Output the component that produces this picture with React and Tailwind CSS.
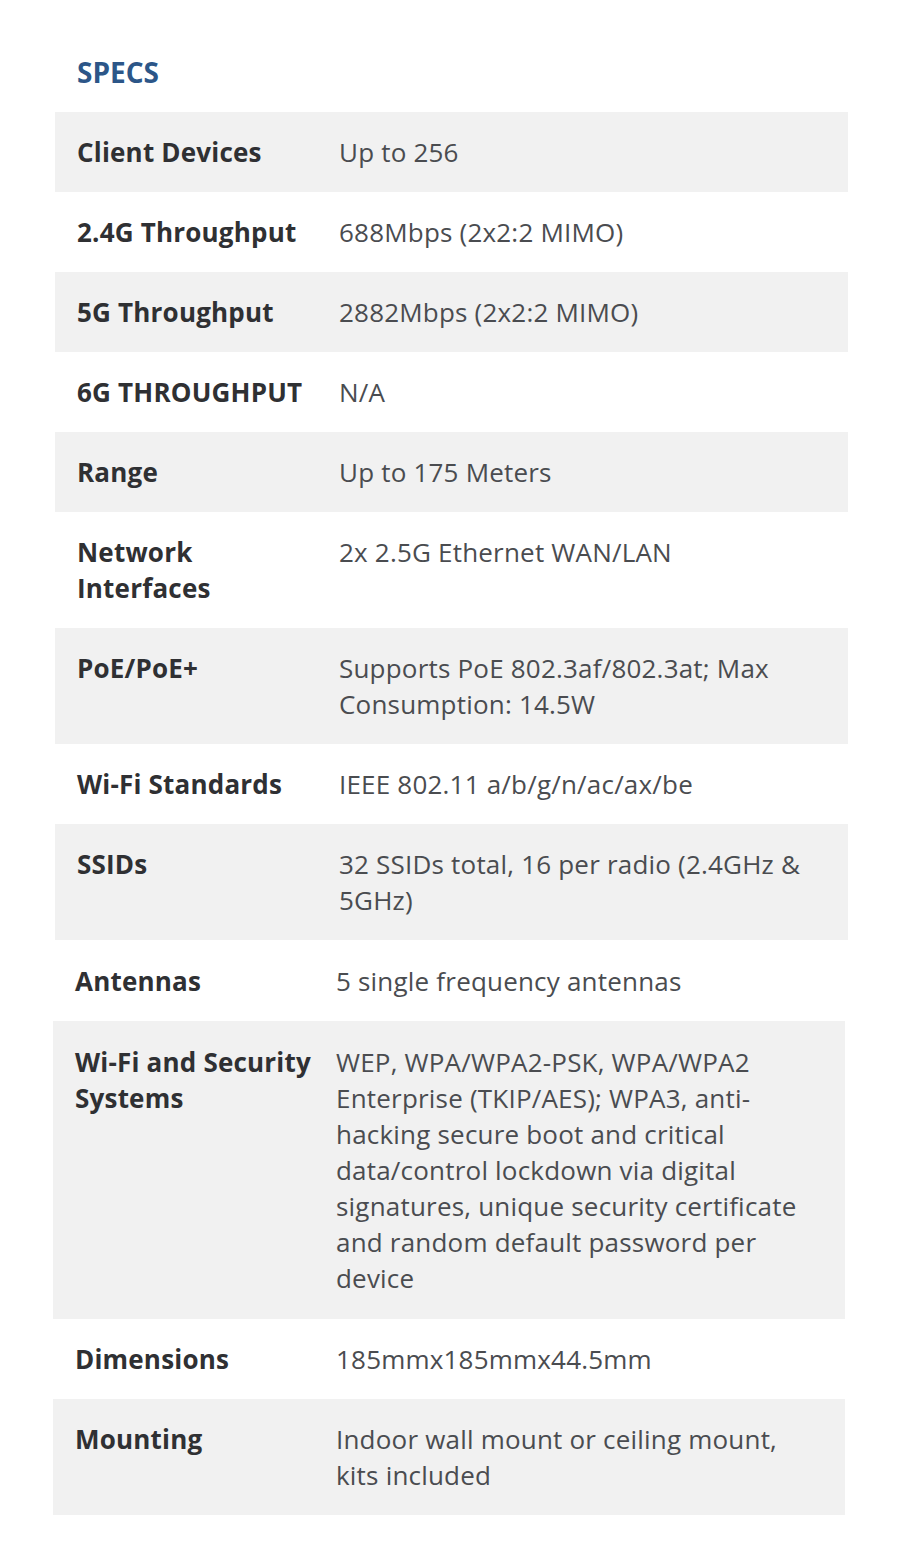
import React from 'react';

const specsTop = [
    ['Client Devices', 'Up to 256'],
    ['2.4G Throughput', '688Mbps (2x2:2 MIMO)'],
    ['5G Throughput', '2882Mbps (2x2:2 MIMO)'],
    ['6G THROUGHPUT', 'N/A'],
    ['Range', 'Up to 175 Meters'],
    ['Network Interfaces', '2x 2.5G Ethernet WAN/LAN'],
    ['PoE/PoE+', 'Supports PoE 802.3af/802.3at; Max Consumption: 14.5W'],
    ['Wi-Fi Standards', 'IEEE 802.11 a/b/g/n/ac/ax/be'],
    ['SSIDs', '32 SSIDs total, 16 per radio (2.4GHz & 5GHz)'],
];

const specsBottom = [
    ['Antennas', '5 single frequency antennas'],
    [<><span className="whitespace-nowrap">Wi-Fi and Security</span> Systems</>, 'WEP, WPA/WPA2-PSK, WPA/WPA2 Enterprise (TKIP/AES); WPA3, anti-hacking secure boot and critical data/control lockdown via digital signatures, unique security certificate and random default password per device'],
    ['Dimensions', '185mmx185mmx44.5mm'],
    ['Mounting', 'Indoor wall mount or ceiling mount, kits included'],
];

const Row = ({ label, value, shaded, labelWidth, pad = 'py-[22px]' }) => (
    <div className={`flex ${shaded ? 'bg-[#f1f1f1]' : 'bg-white'}`}>
        <div className={`${labelWidth} shrink-0 pl-[22px] pr-[2px] ${pad} font-bold tracking-[0.2px] text-[#2f3033]`}>{label}</div>
        <div className={`flex-1 pl-[22px] pr-[44px] ${pad} tracking-[0.2px] text-[#4a4c50]`}>{value}</div>
    </div>
);

export default function App() {
    return (
        <div className="w-[900px] min-h-[1562px] bg-white text-[26px] leading-[36px]" style={{ fontFamily: '"Open Sans", "Noto Sans", sans-serif' }}>
            <h2 className="pl-[77px] pt-[54px] mb-[22px] text-[28px] leading-[36px] font-bold text-[#2c5688]">SPECS</h2>

            {/* ilk blok */}
            <div className="ml-[55px] w-[793px]">
                {specsTop.map(([l, v], i) => (
                    <Row key={i} label={l} value={v} shaded={i % 2 === 0} labelWidth="w-[262px]" />
                ))}
            </div>

            {/* ikinci blok, 2px sola kayık */}
            <div className="ml-[53px] w-[792px] mt-px">
                {specsBottom.map(([l, v], i) => (
                    <Row key={i} label={l} value={v} shaded={i % 2 === 1} labelWidth="w-[261px]" pad={i === 1 ? 'py-[23px]' : 'py-[22px]'} />
                ))}
            </div>
        </div>
    );
}
